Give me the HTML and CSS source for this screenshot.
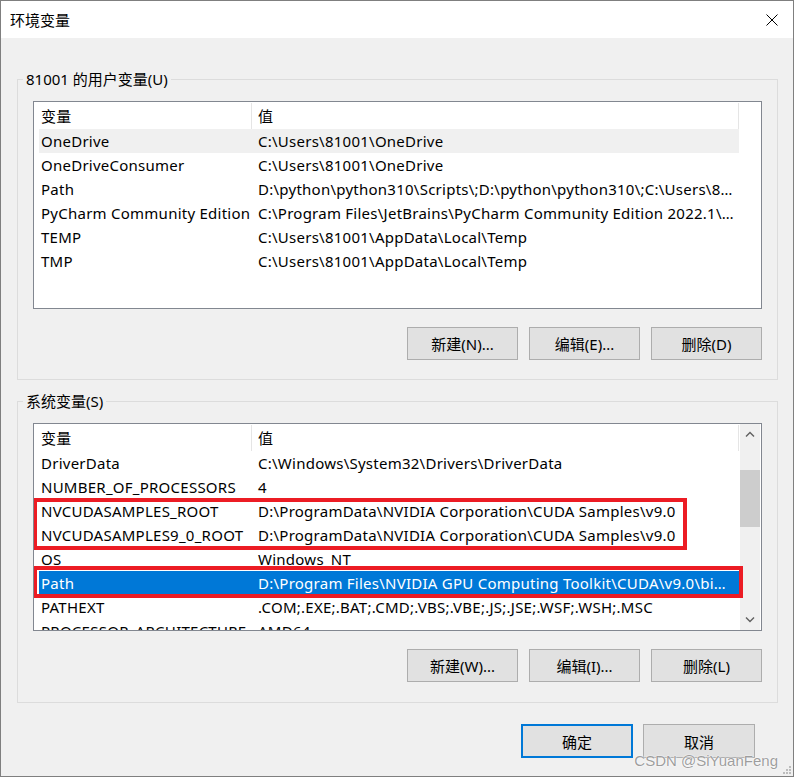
FILE: index.html
```html
<!DOCTYPE html>
<html lang="zh-CN">
<head>
    <meta charset="UTF-8">
    <meta name="viewport" content="width=device-width, initial-scale=1.0">
    <title>环境变量</title>
    <link rel="stylesheet" href="styles.css">
</head>
<body>
    <div class="window">
        <div class="title-bar">
            <span class="title">环境变量</span>
            <svg class="close-btn" width="12" height="12" viewBox="0 0 12 12">
                <path d="M0.5 0.5 L11.5 11.5 M11.5 0.5 L0.5 11.5" stroke="#000" stroke-width="1" fill="none"/>
            </svg>
        </div>

        <div class="dialog-body">
            <!-- 用户变量 -->
            <fieldset class="group">
                <legend>81001 的用户变量(U)</legend>
                <div class="list">
                    <div class="rows">
                        <div class="row header">
                            <div class="cell name">变量</div>
                            <div class="cell value">值</div>
                        </div>
                        <div class="row hover">
                            <div class="cell name">OneDrive</div>
                            <div class="cell value">C:\Users\81001\OneDrive</div>
                        </div>
                        <div class="row">
                            <div class="cell name">OneDriveConsumer</div>
                            <div class="cell value">C:\Users\81001\OneDrive</div>
                        </div>
                        <div class="row">
                            <div class="cell name">Path</div>
                            <div class="cell value">D:\python\python310\Scripts\;D:\python\python310\;C:\Users\81001\AppData\Local\Microsoft\WindowsApps</div>
                        </div>
                        <div class="row">
                            <div class="cell name">PyCharm Community Edition</div>
                            <div class="cell value">C:\Program Files\JetBrains\PyCharm Community Edition 2022.1\bin;</div>
                        </div>
                        <div class="row">
                            <div class="cell name">TEMP</div>
                            <div class="cell value">C:\Users\81001\AppData\Local\Temp</div>
                        </div>
                        <div class="row">
                            <div class="cell name">TMP</div>
                            <div class="cell value">C:\Users\81001\AppData\Local\Temp</div>
                        </div>
                    </div>
                    <div class="scroll-space"></div>
                </div>
                <div class="button-row">
                    <button class="btn">新建(N)...</button>
                    <button class="btn">编辑(E)...</button>
                    <button class="btn">删除(D)</button>
                </div>
            </fieldset>

            <!-- 系统变量 -->
            <fieldset class="group system">
                <legend>系统变量(S)</legend>
                <div class="list">
                    <div class="rows">
                        <div class="row header">
                            <div class="cell name">变量</div>
                            <div class="cell value">值</div>
                        </div>
                        <div class="row">
                            <div class="cell name">DriverData</div>
                            <div class="cell value">C:\Windows\System32\Drivers\DriverData</div>
                        </div>
                        <div class="row">
                            <div class="cell name">NUMBER_OF_PROCESSORS</div>
                            <div class="cell value">4</div>
                        </div>
                        <div class="row">
                            <div class="cell name">NVCUDASAMPLES_ROOT</div>
                            <div class="cell value">D:\ProgramData\NVIDIA Corporation\CUDA Samples\v9.0</div>
                        </div>
                        <div class="row">
                            <div class="cell name">NVCUDASAMPLES9_0_ROOT</div>
                            <div class="cell value">D:\ProgramData\NVIDIA Corporation\CUDA Samples\v9.0</div>
                        </div>
                        <div class="row">
                            <div class="cell name">OS</div>
                            <div class="cell value">Windows_NT</div>
                        </div>
                        <div class="row selected">
                            <div class="cell name">Path</div>
                            <div class="cell value">D:\Program Files\NVIDIA GPU Computing Toolkit\CUDA\v9.0\bin;D:\Program Files\NVIDIA GPU Computing Toolkit\CUDA\v9.0\libnvvp</div>
                        </div>
                        <div class="row">
                            <div class="cell name">PATHEXT</div>
                            <div class="cell value">.COM;.EXE;.BAT;.CMD;.VBS;.VBE;.JS;.JSE;.WSF;.WSH;.MSC</div>
                        </div>
                        <div class="row">
                            <div class="cell name">PROCESSOR_ARCHITECTURE</div>
                            <div class="cell value">AMD64</div>
                        </div>
                    </div>
                    <div class="scrollbar">
                        <div class="scroll-arrow">
                            <svg width="10" height="6" viewBox="0 0 10 6"><path d="M1 5.5 L5 1.5 L9 5.5" stroke="#606060" stroke-width="1.4" fill="none"/></svg>
                        </div>
                        <div class="scroll-track">
                            <div class="scroll-thumb"></div>
                        </div>
                        <div class="scroll-arrow">
                            <svg width="10" height="6" viewBox="0 0 10 6"><path d="M1 0.5 L5 4.5 L9 0.5" stroke="#606060" stroke-width="1.4" fill="none"/></svg>
                        </div>
                    </div>
                    <!-- 标注框 -->
                    <div class="mark mark-cuda"></div>
                    <div class="mark mark-path"></div>
                </div>
                <div class="button-row">
                    <button class="btn">新建(W)...</button>
                    <button class="btn">编辑(I)...</button>
                    <button class="btn">删除(L)</button>
                </div>
            </fieldset>

            <div class="footer">
                <button class="btn default">确定</button>
                <button class="btn">取消</button>
            </div>
        </div>

        <div class="watermark">CSDN @SiYuanFeng</div>
        <svg class="grip" width="9" height="9" viewBox="0 0 9 9">
            <rect x="6" y="0" width="2" height="2" fill="#bcbcbc"/>
            <rect x="3" y="3" width="2" height="2" fill="#bcbcbc"/>
            <rect x="6" y="3" width="2" height="2" fill="#bcbcbc"/>
            <rect x="0" y="6" width="2" height="2" fill="#bcbcbc"/>
            <rect x="3" y="6" width="2" height="2" fill="#bcbcbc"/>
            <rect x="6" y="6" width="2" height="2" fill="#bcbcbc"/>
        </svg>
    </div>
</body>
</html>
```

FILE: styles.css
```css
* {
    box-sizing: border-box;
}

body {
    margin: 0;
    padding: 0;
    font-family: "Noto Sans", "Noto Sans CJK SC", sans-serif;
    font-size: 15px;
    color: #000;
    background-color: #fff;
}

.window {
    position: relative;
    width: 794px;
    height: 777px;
    border: 1px solid #7f7f7f;
    display: flex;
    flex-direction: column;
    overflow: hidden;
}

.title-bar {
    height: 37px;
    background-color: #fff;
    display: flex;
    align-items: center;
    justify-content: space-between;
    padding: 0 15px 0 9px;
    flex-shrink: 0;
}

.title {
    line-height: 20px;
}

.close-btn {
    display: block;
}

.dialog-body {
    flex: 1;
    background-color: #f0f0f0;
    padding: 31px 15px 0 16px;
}

.group {
    margin: 0;
    width: 761px;
    border: 1px solid #dcdcdc;
    padding: 12px 15px 19px 15px;
    min-width: 0;
}

.group.system {
    margin-top: 11px;
    padding-bottom: 20px;
}

.group legend {
    margin-left: -10px;
    padding: 0 3px;
    line-height: 20px;
}

.list {
    position: relative;
    height: 208px;
    border: 1px solid #828790;
    background-color: #fff;
    display: flex;
    padding: 0 1px 0 5px;
    overflow: hidden;
}

.rows {
    width: 700px;
    flex-shrink: 0;
}

.scroll-space {
    width: 21px;
}

.row {
    display: flex;
    height: 24px;
    line-height: 24px;
}

.row.header {
    height: 27px;
    line-height: 26px;
    padding-top: 1px;
}

.row.header .cell.name {
    border-right: 1px solid #e5e5e5;
}

.row.header .cell.value {
    border-right: 1px solid #e5e5e5;
}

.row.hover {
    background-color: #f0f0f0;
}

.row.selected {
    background-color: #0078d7;
    color: #fff;
}

.cell {
    white-space: nowrap;
    overflow: hidden;
    text-overflow: ellipsis;
    letter-spacing: 0.25px;
}

.cell.name {
    width: 213px;
    flex-shrink: 0;
    padding-left: 2px;
}

.cell.value {
    flex: 1;
    padding: 0 4px 0 6px;
}

.scrollbar {
    margin-left: 1px;
    width: 20px;
    background-color: #f0f0f0;
    display: flex;
    flex-direction: column;
}

.scroll-arrow {
    height: 20px;
    display: flex;
    align-items: center;
    justify-content: center;
}

.scroll-track {
    flex: 1;
    padding-top: 26px;
}

.scroll-thumb {
    height: 57px;
    background-color: #cdcdcd;
}

.mark {
    position: absolute;
    left: -1px;
    border: 4px solid #ec1c24;
    z-index: 2;
}

.mark-cuda {
    top: 74px;
    width: 654px;
    height: 52px;
}

.mark-path {
    top: 142px;
    width: 710px;
    height: 32px;
}

.button-row {
    display: flex;
    justify-content: flex-end;
    gap: 11px;
    margin-top: 18px;
}

.btn {
    width: 111px;
    height: 33px;
    font-family: inherit;
    font-size: 15px;
    color: #000;
    background-color: #e1e1e1;
    border: 1px solid #adadad;
    padding: 0;
}

.btn.default {
    border: 2px solid #0078d7;
}

.footer {
    display: flex;
    justify-content: flex-end;
    gap: 10px;
    margin-top: 21px;
    padding-right: 23px;
}

.footer .btn {
    width: 112px;
    height: 34px;
}

.watermark {
    position: absolute;
    right: 15px;
    bottom: 7px;
    font-family: "Liberation Sans", Arial, sans-serif;
    font-size: 15px;
    color: rgba(140, 140, 140, 0.85);
    text-shadow: 0 0 2px #fff, 0 0 1px #fff;
}

.grip {
    position: absolute;
    right: 1px;
    bottom: 1px;
}
```
